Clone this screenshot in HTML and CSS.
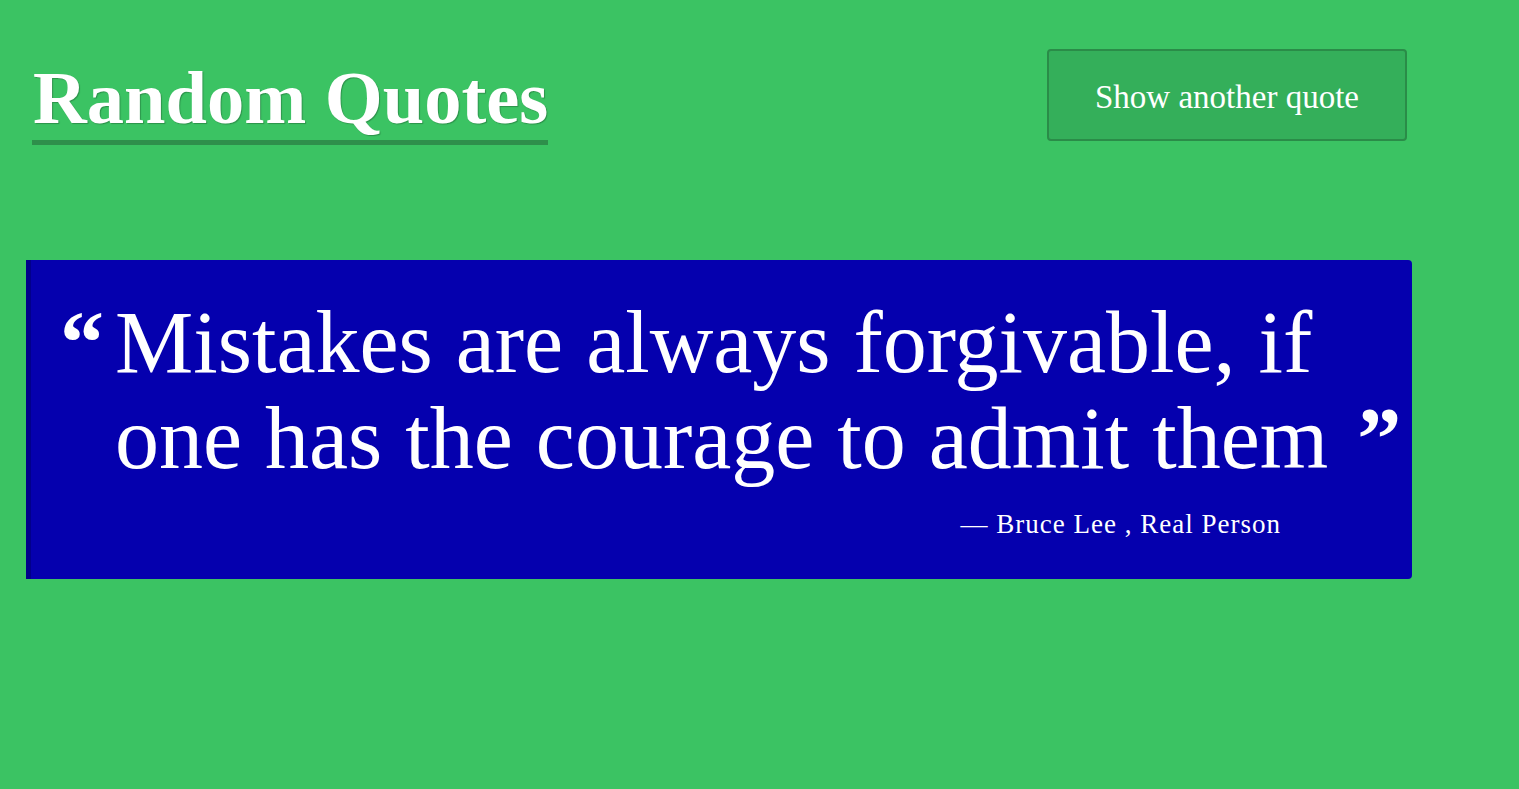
FILE: index.html
```html
<!DOCTYPE html>
<html lang="en">
<head>
<meta charset="utf-8">
<title>Random Quotes</title>
<link rel="stylesheet" href="styles.css">
</head>
<body>
<header class="top">
  <h1 class="title">Random Quotes</h1>
  <button class="next-btn" type="button">Show another quote</button>
</header>
<main class="stage">
  <blockquote class="quote-card">
    <p class="quote-text"><span class="mark-open">“</span>Mistakes are always forgivable, if one has the courage to admit them <span class="mark-close">”</span></p>
    <p class="quote-source">— Bruce Lee , Real Person</p>
  </blockquote>
</main>
</body>
</html>
```

FILE: styles.css
```css
html, body {
  margin: 0;
  padding: 0;
}

body {
  background: #3bc363;
  color: #ffffff;
  font-family: "Liberation Serif", "Times New Roman", serif;
  min-height: 789px;
}

.top {
  display: flex;
  justify-content: space-between;
  align-items: flex-start;
  height: 146px;
  box-sizing: border-box;
  padding: 49px 112px 0 32px;
}

.title {
  margin: 9px 0 0 0;
  font-size: 74.5px;
  font-weight: bold;
  line-height: 1.1;
  border-bottom: 5px solid #2e8f4b;
  text-shadow: 1px 1px 1px rgba(0, 0, 0, 0.25);
  padding-left: 1px;
}

.next-btn {
  width: 360px;
  height: 92px;
  background: #34af5a;
  border: 2px solid #2a8c48;
  border-radius: 4px;
  color: #ffffff;
  font-family: "Liberation Serif", "Times New Roman", serif;
  font-size: 33px;
  padding: 4px 0 0 0;
  cursor: pointer;
}

.stage {
  padding: 114px 107px 0 26px;
}

.quote-card {
  margin: 0;
  background: #0500ae;
  border-left: 5px solid #02008a;
  border-radius: 0 4px 4px 0;
  padding: 35px 0 39px 0;
}

.quote-text {
  margin: 0;
  font-size: 88px;
  line-height: 96px;
  padding-left: 84px;
  padding-right: 4px;
  word-spacing: 1px;
}

.mark-open {
  display: inline-block;
  width: 55px;
  margin-left: -55px;
  font-weight: bold;
}

.mark-close {
  font-weight: bold;
  margin-left: 6px;
}

.quote-source {
  margin: 21px 0 0 0;
  font-size: 27px;
  line-height: 1.2;
  letter-spacing: 1px;
  text-align: right;
  padding-right: 131px;
}
```
